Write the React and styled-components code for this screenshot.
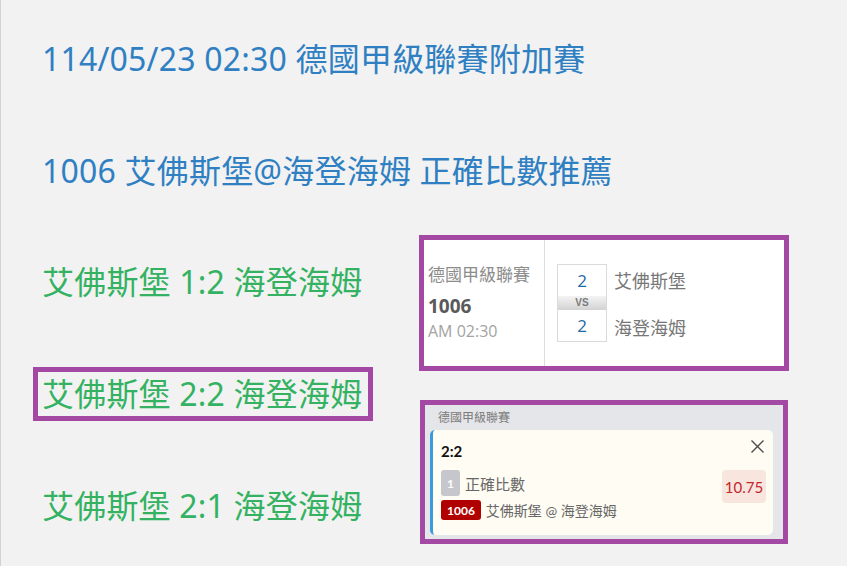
import styled, { createGlobalStyle } from "styled-components";

const GlobalStyle = createGlobalStyle`
    body {
        margin: 0;
        background: #f2f2f2;
        font-family: "Noto Sans", "Noto Sans CJK TC", sans-serif;
    }
`

const Page = styled.div`
    min-height: 566px;
    box-sizing: border-box;
    border-left: 1px solid #d2d2d2;
    padding: 37px 0 0 41px;
    display: flex;
    flex-direction: column;
    gap: 68px;
`

const Line = styled.div`
    font-family: "Noto Sans", "Noto Sans CJK TC", sans-serif;
    font-size: 32px;
    letter-spacing: 0.2px;
    line-height: 44px;
    height: 44px;
    white-space: nowrap;
    color: ${(p) => (p.green ? "#34b262" : "#2f80c2")};
`

const Marked = styled.span`
    display: inline-block;
    margin-left: -4px;
    padding: 0 6px 0 4px;
    outline: 5px solid #a349a4;
`

const Row = styled.div`
    display: grid;
    grid-template-columns: 382px 360px;
    margin-top: -21px;
`

const Picks = styled.div`
    display: flex;
    flex-direction: column;
    gap: 68px;
    padding-top: 20px;
`

const Cards = styled.div`
    display: flex;
    flex-direction: column;
    gap: 39px;
`

const Highlight = styled.div`
    outline: 5px solid #a349a4;
`

// card 1 - match info
const MatchCard = styled(Highlight)`
    display: flex;
    background: #fff;
    height: 126px;
    font-family: "Open Sans", "Noto Sans CJK TC", sans-serif;
`

const InfoCell = styled.div`
    width: 121px;
    border-right: 1px solid #dcdcdc;
    display: flex;
    flex-direction: column;
    justify-content: center;
    padding-left: 4px;
    box-sizing: border-box;
`

const League = styled.div`
    font-size: 17px;
    line-height: 24px;
    color: #8c8c8c;
    white-space: nowrap;
    font-family: "Noto Sans", "Noto Sans CJK TC", sans-serif;
`

const GameNo = styled.div`
    font-size: 19px;
    font-weight: 700;
    line-height: 26px;
    margin-top: 6px;
    color: #5a5a5a;
`

const GameTime = styled.div`
    font-size: 16px;
    line-height: 24px;
    color: #a3a3a3;
`

const Teams = styled.div`
    display: grid;
    grid-template-columns: 50px auto;
    grid-template-rows: 32px 14px 32px;
    column-gap: 7px;
    align-self: center;
    margin-left: 12px;
`

const ScoreBox = styled.div`
    box-sizing: border-box;
    border: 1px solid #dadada;
    ${(p) => (p.top ? "border-bottom: none;" : "border-top: none;")}
    display: flex;
    align-items: center;
    justify-content: center;
    font-size: 17px;
    color: #1d6aa5;
`

const Vs = styled.div`
    background: linear-gradient(#f4f4f4, #d2d2d2);
    border-left: 1px solid #dadada;
    border-right: 1px solid #dadada;
    display: flex;
    align-items: center;
    justify-content: center;
    font: 700 10px/1 "Liberation Sans", sans-serif;
    color: #7a7a7a;
`

const TeamName = styled.div`
    font-family: "Noto Sans", "Noto Sans CJK TC", sans-serif;
    font-size: 18px;
    color: #777;
    display: flex;
    align-items: center;
    margin-top: ${(p) => p.shift || 0}px;
`

// card 2 - bet slip
const SlipCard = styled(Highlight)`
    background: #e5e6e9;
    height: 134px;
    margin-left: 1px;
    width: 358px;
    display: flex;
    flex-direction: column;
    font-family: "Lato", "Noto Sans CJK TC", sans-serif;
`

const SlipLeague = styled.div`
    font-size: 12px;
    line-height: 25px;
    height: 25px;
    color: #7b7b7b;
    padding-left: 13px;
`

const SlipBody = styled.div`
    margin: 0 10px 4px 5px;
    flex: 1;
    background: #fffcf3;
    border-left: 3px solid #3a9bdc;
    border-radius: 5px;
    padding: 10px 7px 0 8px;
    box-sizing: border-box;
`

const SlipHead = styled.div`
    display: flex;
    justify-content: space-between;
    align-items: flex-start;
    height: 30px;
`

const Pick = styled.div`
    font-size: 15px;
    font-weight: 700;
    color: #111;
    line-height: 22px;
`

const Close = styled.svg`
    width: 13px;
    height: 13px;
    margin-right: 2px;
`

const SlipMain = styled.div`
    display: flex;
    justify-content: space-between;
    align-items: flex-start;
`

const SlipLines = styled.div`
    display: flex;
    flex-direction: column;
    gap: 4px;
`

const SlipLine = styled.div`
    display: flex;
    align-items: center;
    gap: 5px;
    color: #676767;
    font-size: ${(p) => p.size}px;
`

const Badge = styled.span`
    display: inline-flex;
    align-items: center;
    justify-content: center;
    height: ${(p) => (p.dark ? 20 : 26)}px;
    padding: 0 6px;
    border-radius: 3px;
    background: ${(p) => (p.dark ? "#b10000" : "#c6c7cd")};
    color: #fff;
    font-size: 12px;
    font-weight: 700;
`

const Odds = styled.div`
    width: 44px;
    height: 33px;
    border-radius: 4px;
    background: #f8e5de;
    color: #c4262b;
    font-size: 15px;
    display: flex;
    align-items: center;
    justify-content: center;
`

function App() {
  return (
    <>
      <GlobalStyle />
      <Page>
        <Line>114/05/23 02:30 德國甲級聯賽附加賽</Line>
        <Line>1006 艾佛斯堡@海登海姆 正確比數推薦</Line>
        <Row>
          <Picks>
            <Line green>艾佛斯堡 1:2 海登海姆</Line>
            <Line green><Marked>艾佛斯堡 2:2 海登海姆</Marked></Line>
            <Line green>艾佛斯堡 2:1 海登海姆</Line>
          </Picks>
          <Cards>
            <MatchCard>
              <InfoCell>
                <League>德國甲級聯賽</League>
                <GameNo>1006</GameNo>
                <GameTime>AM 02:30</GameTime>
              </InfoCell>
              <Teams>
                <ScoreBox top>2</ScoreBox>
                <TeamName>艾佛斯堡</TeamName>
                <Vs>VS</Vs>
                <div />
                <ScoreBox>2</ScoreBox>
                <TeamName shift={2}>海登海姆</TeamName>
              </Teams>
            </MatchCard>
            <SlipCard>
              <SlipLeague>德國甲級聯賽</SlipLeague>
              <SlipBody>
                <SlipHead>
                  <Pick>2:2</Pick>
                  <Close viewBox="0 0 13 13">
                    <path d="M0.5 0.5 L12.5 12.5 M12.5 0.5 L0.5 12.5" stroke="#4a4a4a" strokeWidth="1.4" fill="none" />
                  </Close>
                </SlipHead>
                <SlipMain>
                  <SlipLines>
                    <SlipLine size={15}><Badge>1</Badge>正確比數</SlipLine>
                    <SlipLine size={14}><Badge dark>1006</Badge>艾佛斯堡 @ 海登海姆</SlipLine>
                  </SlipLines>
                  <Odds>10.75</Odds>
                </SlipMain>
              </SlipBody>
            </SlipCard>
          </Cards>
        </Row>
      </Page>
    </>
  )
}

export default App
